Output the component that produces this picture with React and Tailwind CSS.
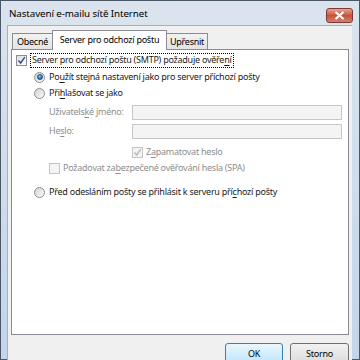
import React from 'react';

const font = { fontFamily: '"Noto Sans", "Open Sans", sans-serif' };

const U = ({ children }) => <span className="underline underline-offset-2">{children}</span>;

const CheckBox = ({ checked, disabled }) => (
    <span className={`w-[11px] h-[11px] shrink-0 border flex items-center justify-center ${disabled ? 'border-[#c4c4c4] bg-[#f4f4f4]' : 'border-[#8e8f8f] bg-gradient-to-br from-[#dcdcdc] to-[#ffffff]'}`}>
        {checked && (
            <svg width="9" height="9" viewBox="0 0 9 9">
                <path d="M1.5 4.5 L3.7 7 L7.8 1.2" fill="none" stroke={disabled ? '#b8b8b8' : '#2a4d8c'} strokeWidth="1.4" />
            </svg>
        )}
    </span>
);

const Radio = ({ checked }) => (
    <span className="w-[11px] h-[11px] shrink-0 rounded-full border border-[#8e8f8f] bg-gradient-to-br from-[#d4d4d4] to-[#fafafa] flex items-center justify-center">
        {checked && <span className="w-[6px] h-[6px] rounded-full bg-[radial-gradient(circle_at_40%_35%,#8fd0f5,#1f5fa8_70%)] border border-[#1d4f85]"></span>}
    </span>
);

export default function App() {
    return (
        <div className="w-[360px] h-[360px] overflow-hidden bg-[#4a5868] p-[1px] text-[9px] tracking-[-0.25px] text-[#1b1b1b] whitespace-nowrap" style={font}>
            <div className="h-full flex flex-col bg-gradient-to-b from-[#dbe4ee] to-[#c3d5ea]">
                {/* Title bar */}
                <div className="h-[24px] shrink-0 flex items-center justify-between pl-[8px] pr-[6px]">
                    <span className="text-[9.8px] tracking-[-0.1px] text-black pt-[3px]">Nastavení e-mailu sítě Internet</span>
                    <div className="w-[27px] h-[15px] mt-[5px] rounded-[3px] border border-[#7a3b33] bg-gradient-to-b from-[#e8a493] via-[#c8513c] to-[#d4806b] flex items-center justify-center">
                        <svg width="11" height="9" viewBox="0 0 11 9">
                            <path d="M1.5 1 L9.5 8 M9.5 1 L1.5 8" stroke="#fff" strokeWidth="2.2" />
                        </svg>
                    </div>
                </div>

                {/* Client area */}
                <div className="flex-1 flex pl-[6px] pr-[7px]">
                    <div className="flex-1 flex flex-col bg-[#f0f0f0] border-l border-t border-[#9fb2c8] px-[3px]">
                        {/* Tabs */}
                        <div className="h-[20px] mt-[3px] flex items-end pl-[1px]">
                            <div className="w-[41px] h-[16px] flex items-center justify-center border border-b-0 border-[#898c95] bg-gradient-to-b from-[#f2f2f2] to-[#e3e3e3] text-black">Obecné</div>
                            <div className="w-[115px] h-[20px] -mb-[1px] -mx-[1px] pb-[2px] flex items-center justify-center border border-b-0 border-[#898c95] bg-white text-black relative z-10">Server pro odchozí poštu</div>
                            <div className="w-[42px] h-[16px] flex items-center justify-center border border-b-0 border-[#898c95] bg-gradient-to-b from-[#f2f2f2] to-[#e3e3e3] text-black">Upřesnit</div>
                        </div>

                        {/* Panel */}
                        <div className="h-[286px] border border-[#898c95] bg-white flex flex-col">
                            <div className="h-[16px] mt-[2px] pl-[4px] flex items-center gap-[3px]">
                                <CheckBox checked />
                                <span className="border border-dotted border-black px-[1px] h-[15px] flex items-center">Server pro odchozí poštu (SMTP) požaduje ověře<U>n</U>í</span>
                            </div>
                            <div className="h-[16px] mt-[1px] pl-[22px] flex items-center gap-[4px]">
                                <Radio checked />
                                <span>Po<U>u</U>žít stejná nastavení jako pro server příchozí pošty</span>
                            </div>
                            <div className="h-[16px] pl-[22px] flex items-center gap-[4px]">
                                <Radio />
                                <span>Při<U>h</U>lašovat se jako</span>
                            </div>
                            <div className="h-[16px] mt-[3px] pl-[37px] pr-[6px] flex items-center">
                                <span className="w-[83px] text-[#8d8d8d]">Uživatels<U>k</U>é jméno:</span>
                                <div className="flex-1 h-[15px] border border-[#c7c7c7] bg-[#f4f4f4]"></div>
                            </div>
                            <div className="h-[16px] mt-[3px] pl-[37px] pr-[6px] flex items-center">
                                <span className="w-[83px] text-[#8d8d8d]">He<U>s</U>lo:</span>
                                <div className="flex-1 h-[15px] border border-[#c7c7c7] bg-[#f4f4f4]"></div>
                            </div>
                            <div className="h-[16px] mt-[5px] pl-[120px] flex items-center gap-[3px] text-[#8d8d8d]">
                                <CheckBox checked disabled />
                                <span>Z<U>a</U>pamatovat heslo</span>
                            </div>
                            <div className="h-[16px] pl-[37px] flex items-center gap-[3px] text-[#8d8d8d]">
                                <CheckBox disabled />
                                <span>Požadovat za<U>b</U>ezpečené ověřování hesla (SPA)</span>
                            </div>
                            <div className="h-[16px] mt-[8px] pl-[22px] flex items-center gap-[4px]">
                                <Radio />
                                <span>Před odesláním pošty se přihlásit k serveru pří<U>c</U>hozí pošty</span>
                            </div>
                        </div>

                        {/* Buttons */}
                        <div className="flex justify-end gap-[7px] mt-[8px]">
                            <button className="w-[58px] h-[21px] rounded-[3px] border border-[#3c7fb1] bg-gradient-to-b from-[#eaf6fd] to-[#bee6fd] text-black">OK</button>
                            <button className="w-[59px] h-[21px] rounded-[3px] border border-[#707070] bg-gradient-to-b from-[#f2f2f2] to-[#dcdcdc] text-black">Storno</button>
                        </div>
                    </div>
                </div>
            </div>
        </div>
    );
}
